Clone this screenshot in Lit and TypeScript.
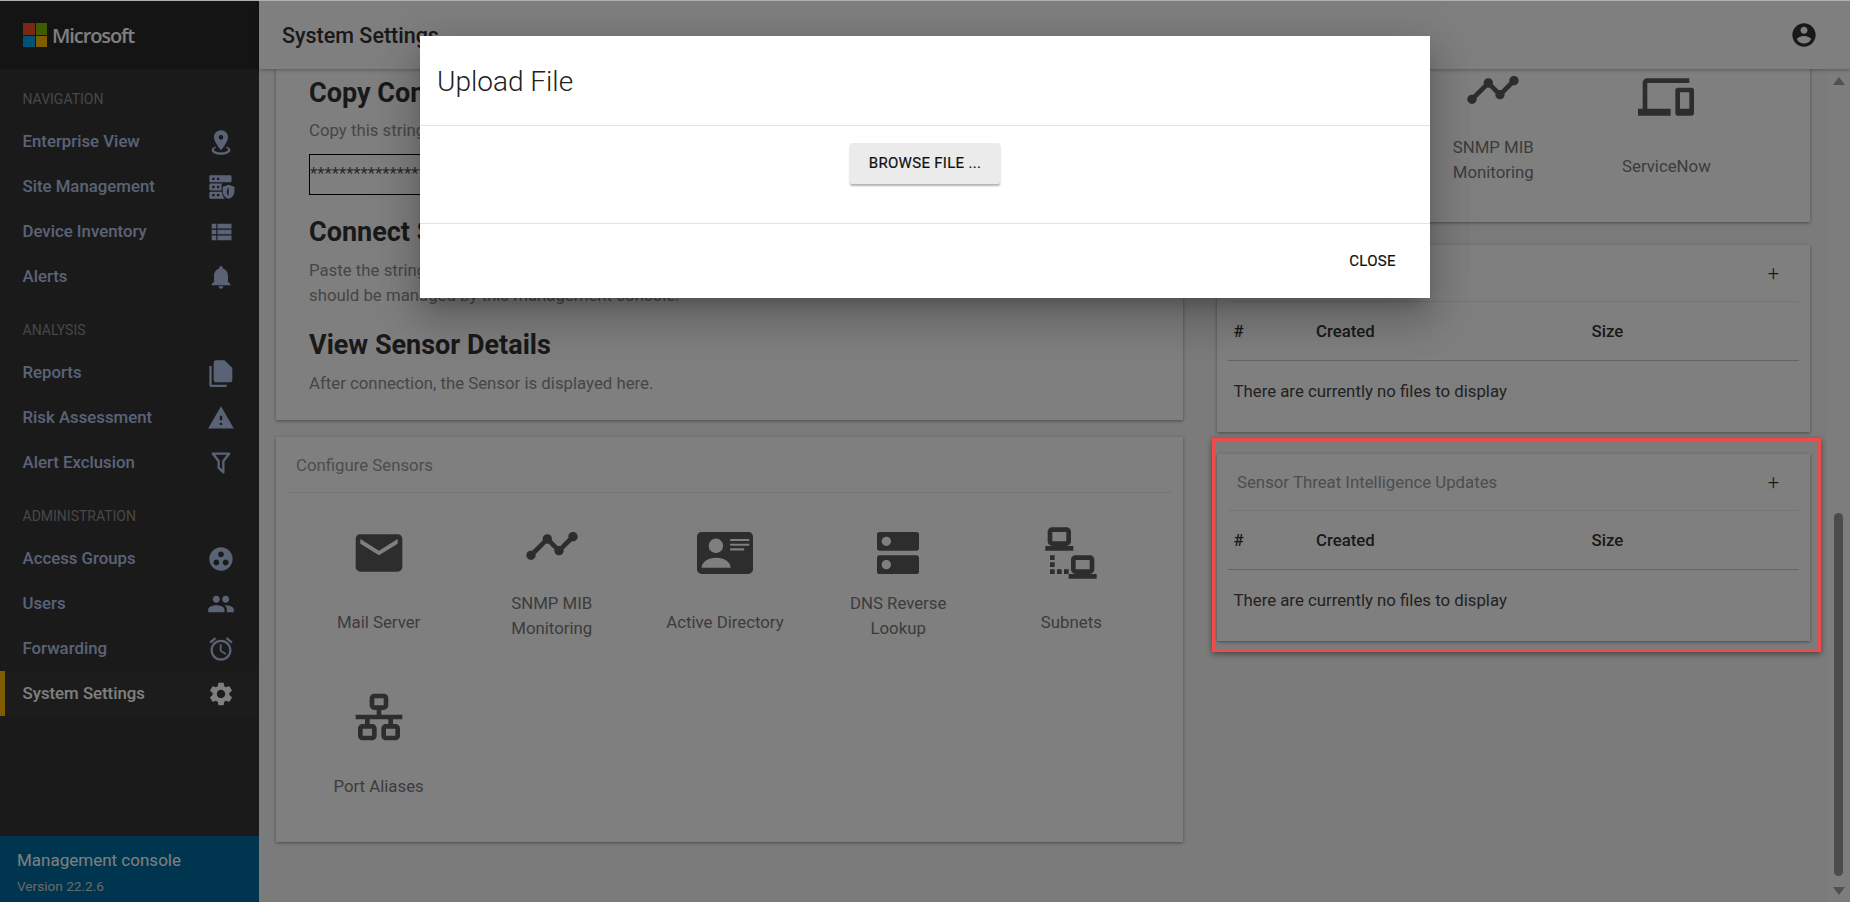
import { LitElement, html, css, svg } from "lit";
import { customElement } from "lit/decorators.js";

// material / mdi style glyphs, all on a 24 unit box
const ICONS: Record<string, string> = {
  marker: "M12,2C15.31,2 18,4.66 18,7.95C18,12.41 12,19 12,19C12,19 6,12.41 6,7.95C6,4.66 8.69,2 12,2M12,6A2,2 0 0,0 10,8A2,2 0 0,0 12,10A2,2 0 0,0 14,8A2,2 0 0,0 12,6M20,19C20,21.21 16.42,23 12,23C7.58,23 4,21.21 4,19C4,17.71 5.22,16.56 7.11,15.83L7.75,16.74C6.67,17.19 6,17.81 6,18.5C6,19.88 8.69,21 12,21C15.31,21 18,19.88 18,18.5C18,17.81 17.33,17.19 16.25,16.74L16.89,15.83C18.78,16.56 20,17.71 20,19Z",
  list: "M4 14h4v-4H4v4zm0 5h4v-4H4v4zm0-10h4V5H4v4zm5 5h12v-4H9v4zm0 5h12v-4H9v4zM9 5v4h12V5H9z",
  bell: "M12 22c1.1 0 2-.9 2-2h-4c0 1.1.89 2 2 2zm6-6v-5c0-3.07-1.64-5.64-4.5-6.32V4c0-.83-.67-1.5-1.5-1.5s-1.5.67-1.5 1.5v.68C7.63 5.36 6 7.92 6 11v5l-2 2v1h16v-1l-2-2z",
  // front sheet top right, back sheet an L along the lower left
  files: "M7.700 1H15l6.700 6.700V18c0 1.100-.9 2-2 2H7.700c-1.100 0-2-.9-2-2V3c0-1.100.9-2 2-2zM2 6h2v16h13v2H4c-1.100 0-2-.9-2-2V6z",
  warning: "M1 21h22L12 2 1 21zm12-3h-2v-2h2v2zm0-4h-2v-4h2v4z",
  filter: "M15,19.88C15.04,20.18 14.94,20.5 14.71,20.71C14.32,21.1 13.69,21.1 13.3,20.71L9.29,16.7C9.06,16.47 8.96,16.16 9,15.87V10.75L4.21,4.62C3.87,4.19 3.95,3.56 4.38,3.22C4.57,3.08 4.78,3 5,3V3H19V3C19.22,3 19.43,3.08 19.62,3.22C20.05,3.56 20.13,4.19 19.79,4.62L15,10.75V19.88M7.04,5L11,10.06V15.58L13,17.58V10.05L16.96,5H7.04Z",
  group: "M12 2C6.48 2 2 6.48 2 12s4.48 10 10 10 10-4.48 10-10S17.52 2 12 2zM8 17.5c-1.38 0-2.5-1.12-2.5-2.5s1.12-2.5 2.5-2.5 2.5 1.12 2.5 2.5-1.12 2.5-2.5 2.5zM9.5 8c0-1.38 1.12-2.5 2.5-2.5s2.5 1.12 2.5 2.5-1.12 2.5-2.5 2.5S9.5 9.38 9.5 8zm6.5 9.5c-1.38 0-2.5-1.12-2.5-2.5s1.12-2.5 2.5-2.5 2.5 1.12 2.5 2.5-1.12 2.5-2.5 2.5z",
  people: "M16 11c1.66 0 2.99-1.34 2.99-3S17.66 5 16 5c-1.66 0-3 1.34-3 3s1.34 3 3 3zm-8 0c1.66 0 2.99-1.34 2.99-3S9.66 5 8 5C6.34 5 5 6.34 5 8s1.34 3 3 3zm0 2c-2.33 0-7 1.17-7 3.5V19h14v-2.5c0-2.33-4.67-3.5-7-3.5zm8 0c-.29 0-.62.02-.97.05 1.16.84 1.97 1.97 1.97 3.45V19h6v-2.5c0-2.33-4.67-3.5-7-3.5z",
  alarm: "M22 5.72l-4.6-3.86-1.29 1.53 4.6 3.86L22 5.72zM7.88 3.39L6.6 1.86 2 5.71l1.29 1.53 4.59-3.85zM12.5 8H11v6l4.75 2.85.75-1.23-4-2.37V8zM12 4c-4.97 0-9 4.03-9 9s4.02 9 9 9c4.97 0 9-4.03 9-9s-4.03-9-9-9zm0 16c-3.87 0-7-3.13-7-7s3.13-7 7-7 7 3.13 7 7-3.13 7-7 7z",
  gear: "M19.14 12.94c.04-.3.06-.61.06-.94 0-.32-.02-.64-.07-.94l2.03-1.58c.18-.14.23-.41.12-.61l-1.92-3.32c-.12-.22-.37-.29-.59-.22l-2.39.96c-.5-.38-1.03-.7-1.62-.94l-.36-2.54c-.04-.24-.24-.41-.48-.41h-3.84c-.24 0-.43.17-.47.41l-.36 2.54c-.59.24-1.13.57-1.62.94l-2.39-.96c-.22-.08-.47 0-.59.22L2.74 8.87c-.12.21-.08.47.12.61l2.03 1.58c-.05.3-.09.63-.09.94s.02.64.07.94l-2.03 1.58c-.18.14-.23.41-.12.61l1.92 3.32c.12.22.37.29.59.22l2.39-.96c.5.38 1.03.7 1.62.94l.36 2.54c.05.24.24.41.48.41h3.84c.24 0 .44-.17.47-.41l.36-2.54c.59-.24 1.13-.56 1.62-.94l2.39.96c.22.08.47 0 .59-.22l1.92-3.32c.12-.22.07-.47-.12-.61l-2.01-1.58zM12 15.6c-1.98 0-3.6-1.62-3.6-3.6s1.62-3.6 3.6-3.6 3.6 1.62 3.6 3.6-1.62 3.6-3.6 3.6z",
  account: "M12 2C6.48 2 2 6.48 2 12s4.48 10 10 10 10-4.48 10-10S17.52 2 12 2zm0 3c1.66 0 3 1.34 3 3s-1.34 3-3 3-3-1.34-3-3 1.34-3 3-3zm0 14.2c-2.5 0-4.71-1.28-6-3.22.03-1.99 4-3.08 6-3.08 1.99 0 5.97 1.09 6 3.08-1.29 1.94-3.5 3.22-6 3.22z",
  mail: "M20 4H4c-1.1 0-1.99.9-1.99 2L2 18c0 1.1.9 2 2 2h16c1.1 0 2-.9 2-2V6c0-1.1-.9-2-2-2zm0 4l-8 5-8-5V6l8 5 8-5v2z",
  // timeline glyph sits 3 units high in the original
  snmp: "M23 5c0 1.1-.9 2-2 2-.18 0-.35-.02-.51-.07l-3.56 3.55c.05.16.07.34.07.52 0 1.1-.9 2-2 2s-2-.9-2-2c0-.18.02-.36.07-.52l-2.55-2.55c-.16.05-.34.07-.52.07s-.36-.02-.52-.07l-4.55 4.56c.05.16.07.33.07.51 0 1.1-.9 2-2 2s-2-.9-2-2 .9-2 2-2c.18 0 .35.02.51.07l4.56-4.55C8.02 6.36 8 6.18 8 6c0-1.1.9-2 2-2s2 .9 2 2c0 .18-.02.36-.07.52l2.55 2.55c.16-.05.34-.07.52-.07s.36.02.52.07l3.55-3.56C19.02 5.35 19 5.18 19 5c0-1.1.9-2 2-2s2 .9 2 2z",
  idcard: "M2 3h20c1.1 0 2 .9 2 2v14c0 1.1-.9 2-2 2H2c-1.1 0-2-.9-2-2V5c0-1.1.9-2 2-2zm6.1 2.8a3.1 3.1 0 1 0 0 6.2 3.1 3.1 0 0 0 0-6.2zM14.2 6v.9h8.2V6h-8.2zm0 2v.9h8.2V8h-8.2zm0 2v.9h6V10h-6zM2 18.3h12.4c0-2.6-2.9-4.3-6.2-4.3S2 15.700 2 18.300z",
  dns: "M20 13H4c-.55 0-1 .45-1 1v6c0 .55.45 1 1 1h16c.55 0 1-.45 1-1v-6c0-.55-.45-1-1-1zM7 19c-1.1 0-2-.9-2-2s.9-2 2-2 2 .9 2 2-.9 2-2 2zM20 3H4c-.55 0-1 .45-1 1v6c0 .55.45 1 1 1h16c.55 0 1-.45 1-1V4c0-.55-.45-1-1-1zM7 9c-1.1 0-2-.9-2-2s.9-2 2-2 2 .9 2 2-.9 2-2 2z",
  subnet: "M4,1C2.89,1 2,1.89 2,3V7C2,8.11 2.89,9 4,9H1V11H13V9H10C11.11,9 12,8.11 12,7V3C12,1.89 11.11,1 10,1H4M4,3H10V7H4V3M14,13C12.89,13 12,13.89 12,15V19C12,20.11 12.89,21 14,21H11V23H23V21H20C21.11,21 22,20.11 22,19V15C22,13.89 21.11,13 20,13H14M14,15H20V19H14V15M3,13H5V15H3V13M3,16H5V18H3V16M3,19H5V21H3V19M6,19H8V21H6V19M9,19H11V21H9V19Z",
  lan: "M10,2C8.89,2 8,2.89 8,4V7C8,8.11 8.89,9 10,9H11V11H2V13H6V15H5C3.89,15 3,15.89 3,17V20C3,21.11 3.89,22 5,22H9C10.11,22 11,21.11 11,20V17C11,15.89 10.11,15 9,15H8V13H16V15H15C13.89,15 13,15.89 13,17V20C13,21.11 13.89,22 15,22H19C20.11,22 21,21.11 21,20V17C21,15.89 20.11,15 19,15H18V13H22V11H13V9H14C15.11,9 16,8.11 16,7V4C16,2.89 15.11,2 14,2H10M10,4H14V7H10V4M5,17H9V20H5V17M15,17H19V20H15V17Z",
  devices: "M4 6h18V4H4c-1.1 0-2 .9-2 2v11H0v3h14v-3H4V6zm19 2h-6c-.55 0-1 .45-1 1v10c0 .55.45 1 1 1h6c.55 0 1-.45 1-1V9c0-.55-.45-1-1-1zm-1 9h-4v-7h4v7z",
  // three server rows with a shield in the lower right corner
  sites: "M3 2h17c.5 0 1 .5 1 1v4c0 .5-.5 1-1 1H3c-.5 0-1-.5-1-1V3c0-.5.5-1 1-1zm1.500 2v2h2V4h-2zm4 0v2h2V4h-2zM3 9h11l-1.500.7V15H3c-.5 0-1-.5-1-1v-4c0-.5.5-1 1-1zm1.500 2v2h2v-2h-2zm4 0v2h2v-2h-2zM3 16h9.800c.3 2.500 1 4.500 2.400 6H3c-.5 0-1-.5-1-1v-4c0-.5.5-1 1-1zm1.500 2v2h2v-2h-2zm4 0v2h2v-2h-2zM18.500 10l5 1.800v4c0 3-2 5.400-5 6.200-3-.8-5-3.200-5-6.200v-4l5-1.800zm0 2.400c-1 .6-1.500 2-1.500 3.600s.5 3 1.500 3.600V12.400z",
};

type NavItem = { label: string; icon: string; active?: boolean };

const NAV: { title: string; items: NavItem[] }[] = [
  {
    title: "NAVIGATION",
    items: [
      { label: "Enterprise View", icon: "marker" },
      { label: "Site Management", icon: "sites" },
      { label: "Device Inventory", icon: "list" },
      { label: "Alerts", icon: "bell" },
    ],
  },
  {
    title: "ANALYSIS",
    items: [
      { label: "Reports", icon: "files" },
      { label: "Risk Assessment", icon: "warning" },
      { label: "Alert Exclusion", icon: "filter" },
    ],
  },
  {
    title: "ADMINISTRATION",
    items: [
      { label: "Access Groups", icon: "group" },
      { label: "Users", icon: "people" },
      { label: "Forwarding", icon: "alarm" },
      { label: "System Settings", icon: "gear", active: true },
    ],
  },
];

const SENSOR_TILES = [
  { label: ["Mail Server"], icon: "mail" },
  { label: ["SNMP MIB", "Monitoring"], icon: "snmp" },
  { label: ["Active Directory"], icon: "idcard" },
  { label: ["DNS Reverse", "Lookup"], icon: "dns" },
  { label: ["Subnets"], icon: "subnet" },
  { label: ["Port Aliases"], icon: "lan" },
];

const icon = (name: string, cls = "") =>
  html`<svg class=${cls} viewBox="0 0 24 24" fill="currentColor" fill-rule="evenodd">${svg`<path d=${ICONS[name]}></path>`}</svg>`;

@customElement("app-root")
export class AppRoot extends LitElement {
  static styles = css`
    :host {
      display: block;
      position: relative;
      width: 1850px;
      height: 902px;
      overflow: hidden;
      font-family: Roboto, "Liberation Sans", sans-serif;
      font-size: 16.8px;
      color: #666;
      background: #f6f6f6;
    }
    * {
      box-sizing: border-box;
    }
    .layout {
      display: flex;
      height: 902px;
      padding-top: 1px;
    }

    /* sidebar */
    .sidebar {
      width: 259px;
      flex: none;
      display: flex;
      flex-direction: column;
      background: #343434;
    }
    .brand {
      height: 68px;
      flex: none;
      display: flex;
      align-items: center;
      gap: 5px;
      padding-left: 23px;
      background: #282828;
      color: #fff;
      font-family: "Open Sans", sans-serif;
      font-weight: 600;
      font-size: 20px;
      letter-spacing: -1.1px;
    }
    .logo {
      display: grid;
      grid-template-columns: 11.5px 11.5px;
      grid-auto-rows: 11.5px;
      gap: 1px;
    }
    .logo i:nth-child(1) { background: #f25022; }
    .logo i:nth-child(2) { background: #7fba00; }
    .logo i:nth-child(3) { background: #00a4ef; }
    .logo i:nth-child(4) { background: #ffb900; }
    .nav {
      flex: 1;
    }
    .section {
      padding-top: 20px;
    }
    .section + .section {
      padding-top: 21px;
    }
    .section-title {
      height: 20px;
      line-height: 20px;
      margin-bottom: 10px;
      padding-left: 22.5px;
      font-size: 14px;
      color: #8f8f8f;
    }
    .nav-item {
      height: 45px;
      display: flex;
      align-items: center;
      justify-content: space-between;
      padding: 0 24px 0 22.5px;
      font-weight: 500;
      color: #b4c6ec;
    }
    .nav-item span {
      margin-bottom: 2px;
    }
    .nav-item svg {
      width: 28px;
      height: 28px;
    }
    .nav-item.active {
      padding-left: 17.5px;
      border-left: 5px solid #ffba00;
      background: #383838;
      color: #fff;
    }
    .foot {
      height: 66px;
      flex: none;
      padding: 13px 17px 0;
      background: #006a9e;
      color: #fff;
    }
    .foot-name {
      font-size: 17px;
      line-height: 22px;
    }
    .foot-version {
      margin-top: 5px;
      font-size: 13.6px;
      line-height: 20px;
      color: #d4d4d4;
    }

    /* main column */
    .main {
      flex: 1;
      min-width: 0;
      display: flex;
      flex-direction: column;
    }
    .topbar {
      height: 68px;
      flex: none;
      position: relative;
      z-index: 1;
      display: flex;
      align-items: center;
      justify-content: space-between;
      padding: 0 32px 0 23px;
      background: #fff;
      box-shadow: 0 1px 4px rgba(0, 0, 0, 0.3);
      color: #333;
      font-size: 21.5px;
      font-weight: 500;
    }
    .topbar svg {
      width: 28px;
      height: 28px;
    }
    .body {
      flex: 1;
      min-height: 0;
      display: flex;
      overflow: hidden;
    }
    .scroll {
      flex: 1;
      min-width: 0;
      padding: 0 17px;
    }
    /* page is scrolled down, the tops of the first cards are cut off */
    .columns {
      display: grid;
      grid-template-columns: 907px 593px;
      column-gap: 34px;
      align-items: start;
      margin-top: -40px;
    }
    .stack {
      display: flex;
      flex-direction: column;
    }
    .card {
      background: #fff;
      box-shadow: 0 1px 3px rgba(0, 0, 0, 0.4);
    }

    /* steps card */
    .steps {
      height: 391px;
      padding: 46px 33px 0;
    }
    .steps h2 {
      margin: 0;
      font-size: 27px;
      line-height: 36px;
      font-weight: 700;
      color: #333;
      white-space: nowrap;
    }
    .steps p {
      margin: 7px 0 0;
      line-height: 25px;
      color: #8c8c8c;
      white-space: nowrap;
    }
    .steps .next + p {
      margin-top: 8px;
    }
    .steps p + .next,
    .conn + .next {
      margin-top: 19px;
    }
    .conn {
      height: 41px;
      width: 700px;
      margin-top: 11px;
      padding: 8px 0 0;
      border: 1px solid #000;
      color: #555;
      overflow: hidden;
      white-space: nowrap;
    }

    /* tile cards */
    .configure {
      margin-top: 17px;
      height: 405px;
      padding: 0 11px;
    }
    .card-title {
      height: 56px;
      border-bottom: 1px solid #ebebeb;
      display: flex;
      align-items: center;
      justify-content: space-between;
      padding: 0 15px 0 9px;
      color: #9a9a9a;
    }
    .tiles {
      display: grid;
      grid-template-columns: repeat(5, 173.200px);
      grid-auto-rows: 164px;
      padding-left: 5px;
    }
    .tile {
      display: flex;
      flex-direction: column;
      align-items: center;
      padding-top: 32px;
    }
    .tile svg {
      width: 56px;
      height: 56px;
      flex: none;
      color: #5a5a5a;
    }
    .tile-label {
      margin-top: 10px;
      line-height: 25px;
      text-align: center;
      color: #787878;
    }
    .tile-label.one {
      padding-top: 19px;
    }
    .monitors {
      height: 193px;
      padding: 0 11px;
    }
    .monitors .tiles {
      grid-template-columns: repeat(2, 173.200px);
      justify-content: end;
      padding: 8px 46px 0 0;
    }

    /* file cards */
    .files {
      margin-top: 23px;
      height: 187px;
      padding: 0 11px;
    }
    .files.last {
      margin-top: 22px;
    }
    .files .card-title {
      height: 57px;
      padding: 0 20px 0 9px;
    }
    .plus {
      font-size: 20px;
      font-weight: 300;
      color: #333;
    }
    .file-head {
      height: 59px;
      display: grid;
      grid-template-columns: 82.500px 275.500px 1fr;
      align-items: center;
      padding-left: 5.5px;
      border-bottom: 1px solid #c8c8c8;
      font-weight: 500;
      color: #333;
    }
    .file-empty {
      padding: 18px 5.5px 0;
      line-height: 25px;
      color: #444;
    }

    /* scrollbar */
    .bar {
      width: 23px;
      flex: none;
      display: flex;
      flex-direction: column;
      align-items: center;
      background: #fafafa;
    }
    .arrow {
      width: 0;
      height: 0;
      border-left: 6px solid transparent;
      border-right: 6px solid transparent;
    }
    .arrow.up {
      margin-top: 8px;
      border-bottom: 8px solid #a3a3a3;
    }
    .arrow.down {
      margin-top: 11px;
      border-top: 8px solid #a3a3a3;
    }
    .thumb {
      width: 9px;
      height: 363px;
      margin-top: 428px;
      border-radius: 5px;
      background: #979797;
    }

    /* modal over the backdrop */
    .backdrop {
      position: absolute;
      inset: 0;
      z-index: 2;
      background: rgba(0, 0, 0, 0.5);
    }
    .browser-edge {
      position: absolute;
      left: 0;
      right: 0;
      top: 0;
      height: 1px;
      z-index: 3;
      background: #b0b0b0;
    }
    .dialog {
      position: absolute;
      left: 420px;
      top: 36px;
      width: 1010px;
      height: 262px;
      z-index: 3;
      display: flex;
      flex-direction: column;
      background: #fff;
      box-shadow: 0 11px 15px -7px rgba(0, 0, 0, 0.2), 0 24px 38px 3px rgba(0, 0, 0, 0.14), 0 9px 46px 8px rgba(0, 0, 0, 0.12);
      color: #212121;
    }
    .dialog-title {
      height: 90px;
      flex: none;
      display: flex;
      align-items: center;
      padding: 2px 0 0 17px;
      border-bottom: 1px solid #e3e3e3;
      font-size: 28px;
      font-weight: 300;
    }
    .dialog-body {
      height: 98px;
      flex: none;
      display: flex;
      justify-content: center;
      padding-top: 17px;
      border-bottom: 1px solid #e3e3e3;
    }
    .browse {
      width: 150px;
      height: 41px;
      padding: 0 0 2px;
      border: 0;
      border-radius: 2px;
      background: #ebebeb;
      box-shadow: 0 2px 2px rgba(0, 0, 0, 0.3);
      font: 400 15px Roboto, sans-serif;
      letter-spacing: 0.3px;
      -webkit-text-stroke: 0.2px #111;
      color: #111;
    }
    .dialog-actions {
      flex: 1;
      display: flex;
      justify-content: flex-end;
      align-items: center;
      padding-right: 34px;
    }
    .close {
      border: 0;
      padding: 0;
      background: none;
      font: 400 15px Roboto, sans-serif;
      letter-spacing: 0.35px;
      -webkit-text-stroke: 0.2px #111;
      color: #111;
    }

    /* callout drawn on the screenshot */
    .callout {
      position: absolute;
      left: 1212px;
      top: 438px;
      width: 609px;
      height: 214px;
      z-index: 3;
      border: 3px solid #ef4b4b;
      box-shadow: 0 2px 6px rgba(0, 0, 0, 0.45);
    }
  `;

  private tile(t: { label: string[]; icon: string }) {
    return html`<div class="tile">
      ${icon(t.icon)}
      <div class="tile-label ${t.label.length === 1 ? "one" : ""}">
        ${t.label.map((line) => html`<div>${line}</div>`)}
      </div>
    </div>`;
  }

  private filesCard(title: string, last = false) {
    return html`<div class="card files ${last ? "last" : ""}">
      <div class="card-title"><span>${title}</span><span class="plus">+</span></div>
      <div class="file-head"><span>#</span><span>Created</span><span>Size</span></div>
      <div class="file-empty">There are currently no files to display</div>
    </div>`;
  }

  render() {
    return html`
      <div class="layout">
        <aside class="sidebar">
          <div class="brand">
            <div class="logo"><i></i><i></i><i></i><i></i></div>
            <span>Microsoft</span>
          </div>
          <nav class="nav">
            ${NAV.map(
              (s) => html`<div class="section">
                <div class="section-title">${s.title}</div>
                ${s.items.map(
                  (it) => html`<div class="nav-item ${it.active ? "active" : ""}">
                    <span>${it.label}</span>${icon(it.icon)}
                  </div>`
                )}
              </div>`
            )}
          </nav>
          <div class="foot">
            <div class="foot-name">Management console</div>
            <div class="foot-version">Version 22.2.6</div>
          </div>
        </aside>
        <div class="main">
          <header class="topbar"><span>System Settings</span>${icon("account")}</header>
          <div class="body">
            <div class="scroll">
              <div class="columns">
                <div class="stack">
                  <section class="card steps">
                    <h2>Copy Connection String</h2>
                    <p>Copy this string and paste it into the Sensor console.</p>
                    <div class="conn">********************************************************************</div>
                    <h2 class="next">Connect Sensor to Management Console</h2>
                    <p>
                      Paste the string into the Connection String field of each Sensor that<br />
                      should be managed by this management console.
                    </p>
                    <h2 class="next">View Sensor Details</h2>
                    <p>After connection, the Sensor is displayed here.</p>
                  </section>
                  <section class="card configure">
                    <div class="card-title"><span>Configure Sensors</span></div>
                    <div class="tiles">${SENSOR_TILES.map((t) => this.tile(t))}</div>
                  </section>
                </div>
                <div class="stack">
                  <section class="card monitors">
                    <div class="tiles">
                      ${this.tile({ label: ["SNMP MIB", "Monitoring"], icon: "snmp" })}
                      ${this.tile({ label: ["ServiceNow"], icon: "devices" })}
                    </div>
                  </section>
                  ${this.filesCard("Sensor Software Updates")}
                  ${this.filesCard("Sensor Threat Intelligence Updates", true)}
                </div>
              </div>
            </div>
            <div class="bar">
              <div class="arrow up"></div>
              <div class="thumb"></div>
              <div class="arrow down"></div>
            </div>
          </div>
        </div>
      </div>
      <div class="backdrop"></div>
      <div class="browser-edge"></div>
      <div class="callout"></div>
      <div class="dialog">
        <div class="dialog-title">Upload File</div>
        <div class="dialog-body"><button class="browse">BROWSE FILE ...</button></div>
        <div class="dialog-actions"><button class="close">CLOSE</button></div>
      </div>
    `;
  }
}
